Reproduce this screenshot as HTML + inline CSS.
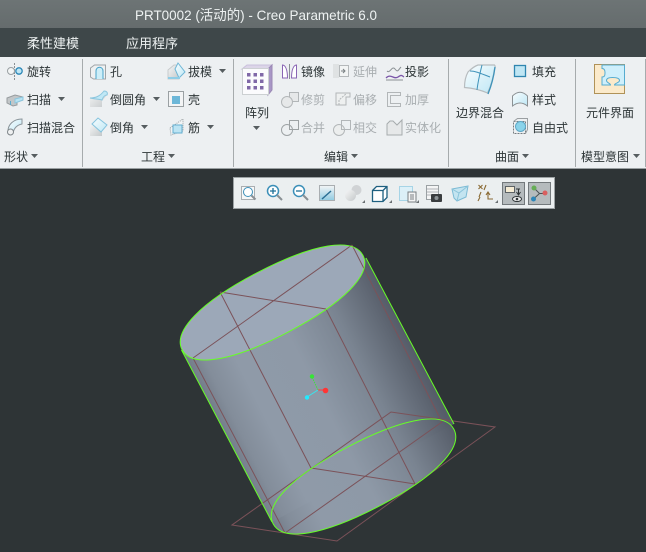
<!DOCTYPE html>
<html><head><meta charset="utf-8"><style>
html,body{margin:0;padding:0;background:#2e3436;width:646px;height:552px;overflow:hidden}
svg{display:block}
text{font-family:"Liberation Sans","Noto Sans CJK SC",sans-serif;font-size:12px;fill:#2c3436}
.d{fill:#a9aeb1}
</style></head><body>
<svg width="646" height="552" viewBox="0 0 646 552" xmlns="http://www.w3.org/2000/svg">
<defs>
<linearGradient id="tb" x1="0" y1="0" x2="0" y2="1"><stop offset="0" stop-color="#6d7475"/><stop offset="1" stop-color="#656c6d"/></linearGradient>
<linearGradient id="body" gradientUnits="userSpaceOnUse" x1="181" y1="351" x2="366" y2="258">
<stop offset="0" stop-color="#727b88"/><stop offset=".08" stop-color="#838d9a"/><stop offset=".22" stop-color="#8f9aa8"/><stop offset=".5" stop-color="#8e99a7"/><stop offset=".75" stop-color="#7a8491"/><stop offset="1" stop-color="#565d69"/>
</linearGradient>
<linearGradient id="capg" gradientUnits="userSpaceOnUse" x1="-102" y1="0" x2="102" y2="0">
<stop offset="0" stop-color="#727b88"/><stop offset=".08" stop-color="#838d9a"/><stop offset=".22" stop-color="#8f9aa8"/><stop offset=".5" stop-color="#8e99a7"/><stop offset=".75" stop-color="#7a8491"/><stop offset="1" stop-color="#565d69"/>
</linearGradient>
<linearGradient id="blu" x1="0" y1="0" x2="1" y2="1"><stop offset="0" stop-color="#e6f6fc"/><stop offset="1" stop-color="#7cc8e6"/></linearGradient>
<linearGradient id="pale" x1="0" y1="0" x2="1" y2="1"><stop offset="0" stop-color="#fafdfe"/><stop offset="1" stop-color="#bde7f5"/></linearGradient>
<linearGradient id="gr" x1="0" y1="0" x2="1" y2="1"><stop offset="0" stop-color="#f6f7f7"/><stop offset="1" stop-color="#c4c8ca"/></linearGradient>
<linearGradient id="st" x1="0" y1="0" x2="0" y2="1"><stop offset="0" stop-color="#f4f5f6"/><stop offset="1" stop-color="#8fcbe2"/></linearGradient>
<path id="cap" transform="translate(272.500 302.500) rotate(-27.600)" d="M102 0C102 20.800 63.200 33.500 0 33.500S-102 20.800 -102 0S-63.200 -33.500 0 -33.500S102 -20.800 102 0Z"/>
</defs>

<!-- chrome -->
<rect width="646" height="552" fill="#2e3436"/>
<rect width="646" height="28" fill="url(#tb)"/>
<rect y="28" width="646" height="29" fill="#3e4749"/>
<rect y="57" width="646" height="111" fill="#edf0f2"/>
<rect y="168" width="646" height="1" fill="#9aa0a2"/>
<text x="135" y="20" textLength="242" lengthAdjust="spacingAndGlyphs" style="font-size:14px;fill:#eef2f2">PRT0002 (活动的) - Creo Parametric 6.0</text>
<text x="27" y="48" style="font-size:13px;fill:#eef2f2">柔性建模</text>
<text x="126" y="48" style="font-size:13px;fill:#eef2f2">应用程序</text>
<g fill="#a6abad"><rect x="82" y="59" width="1" height="108"/><rect x="233" y="59" width="1" height="108"/><rect x="448" y="59" width="1" height="108"/><rect x="575" y="59" width="1" height="108"/><rect x="645" y="59" width="1" height="108"/></g>

<!-- ribbon text -->
<text x="27" y="76">旋转</text><text x="27" y="104">扫描</text><text x="27" y="132">扫描混合</text>
<text x="4" y="161">形状</text>
<text x="110" y="76">孔</text><text x="110" y="104">倒圆角</text><text x="110" y="132">倒角</text>
<text x="188" y="76">拔模</text><text x="188" y="104">壳</text><text x="188" y="132">筋</text>
<text x="141" y="161">工程</text>
<text x="245" y="117">阵列</text>
<text x="301" y="76">镜像</text><text x="405" y="76">投影</text>
<text class="d" x="353" y="76">延伸</text><text class="d" x="301" y="104">修剪</text><text class="d" x="353" y="104">偏移</text><text class="d" x="405" y="104">加厚</text><text class="d" x="301" y="132">合并</text><text class="d" x="353" y="132">相交</text><text class="d" x="405" y="132">实体化</text>
<text x="324" y="161">编辑</text>
<text x="532" y="76">填充</text><text x="532" y="104">样式</text><text x="532" y="132">自由式</text>
<text x="456" y="117">边界混合</text><text x="495" y="161">曲面</text>
<text x="586" y="117">元件界面</text><text x="581" y="161">模型意图</text>

<!-- dropdown arrows -->
<path fill="#565d60" d="M58 97h7l-3.500 4zM31 154h7l-3.500 4zM153 97h7l-3.500 4zM141 125h7l-3.500 4zM219 69h7l-3.500 4zM207 125h7l-3.500 4zM168 154h7l-3.500 4zM253 126h7l-3.500 4zM351 154h7l-3.500 4zM522 154h7l-3.500 4zM633 154h7l-3.500 4z"/>

<!-- shape icons -->
<g fill="none" stroke-width="1">
<path d="M14.500 63v17" stroke="#8a9094" stroke-dasharray="2 1"/>
<circle cx="11" cy="71" r="3.500" stroke="#9aa0a3" fill="#f3f5f5"/><circle cx="19" cy="71" r="3.200" stroke="#2d88b8" fill="#bfe6f4" stroke-width="1.300"/>
<path d="M7 98l8-3 8 2v3l-6 2v3l-4 1-6-3z" fill="#c2c6c8" stroke="#979c9f"/><path d="M15 99l8-2v3l-8 3z" fill="#b8e3f2" stroke="#8cc6de"/><path d="M10.500 101v4" stroke="#5aaccf"/>
<path d="M8 131c0-6 5-12 14-12v5c-5 1-8 4-9 9z" fill="url(#pale)" stroke="#8a949a"/><circle cx="10.500" cy="132" r="3" fill="#eef0f1" stroke="#7e8589"/>

<!-- engineering icons -->
<path d="M90.500 68l4-3h11v14h-12l-3-2z" fill="#eef0f1" stroke="#a0a5a8"/><path d="M96 79v-8c0-5 7-5 7 0v8" fill="#cdeef8" stroke="#4ba4ca"/>
<path d="M90 98c7 0 12-3 14-7l3 4-5 6v6H90z" fill="url(#gr)"/><path d="M90 98c6 0 10-2 14-7 3 0 4 2 3 4-2 0-4 2-5 5-3-1-8-1-12-2z" fill="#c0e8f6" stroke="#8cc6de"/>
<path d="M90 126l8-3 4 5v8H90z" fill="url(#gr)"/><path d="M98 118l9 7-6 7-9-8z" fill="url(#pale)" stroke="#86c4de"/>
<path d="M168 70l6-5h5v14h-11z" fill="url(#gr)" stroke="#c8cbcd"/><path d="M178 63l7 9-6 6-4-9z" fill="url(#pale)" stroke="#6fb6d6"/><path d="M168 78h12" stroke="#8fcde6" stroke-width="2"/>
<rect x="168.500" y="91.500" width="15" height="15" fill="#f3f4f5" stroke="#9aa0a3"/><rect x="172" y="96" width="8" height="8" fill="#6db7d8"/>
<path d="M170 128l13-9v12l-12 4z" fill="#f2f4f5" stroke="#9aa0a3" stroke-dasharray="1 1"/><path d="M173 125h9v8h-9z" fill="#bce4f3" stroke="#63aed0"/>

<!-- pattern icon -->
<path d="M242 69l5-4h25l-4 4z" fill="#dcd5e8" stroke="#c9bfdc"/><path d="M268 69l4-4v25l-4 5z" fill="#a896c6" stroke="#9a88b4"/>
<rect x="242.500" y="68.500" width="26" height="26" fill="#fbfbfd" stroke="#ccd0d2"/>
<g fill="#8068a8" stroke="none">
<rect x="247" y="73" width="3.500" height="3.500"/><rect x="253.500" y="73" width="3.500" height="3.500"/><rect x="260" y="73" width="3.500" height="3.500"/>
<rect x="247" y="79.500" width="3.500" height="3.500"/><rect x="253.500" y="79.500" width="3.500" height="3.500"/><rect x="260" y="79.500" width="3.500" height="3.500"/>
<rect x="247" y="86" width="3.500" height="3.500"/><rect x="253.500" y="86" width="3.500" height="3.500"/><rect x="260" y="86" width="3.500" height="3.500"/>
</g>

<!-- edit icons -->
<path d="M282.500 78V65c3 0 5 5 5 13zM296.500 78V65c-3 0-5 5-5 13z" stroke="#8a66b4" fill="#fff"/><path d="M289.500 64v15" stroke="#8a9094"/>
<rect x="333" y="64" width="6" height="14" fill="#dfe2e3"/><rect x="339.500" y="65.500" width="9" height="11" fill="#f2f4f4" stroke="#b4b8ba"/><path d="M341 71h4m-2-2l2 2-2 2" stroke="#7a8083"/>
<path d="M386 78c5-5 8 2 12-1s4-1 6 0" stroke="#7a55a8" stroke-width="1.300"/><path d="M387 71c3 3 5-6 8-2s3 1 6-2" stroke="#8a9094"/><path d="M386 80h17" stroke="#8a9094"/>
<g stroke="#b2b6b8">
<rect x="289.500" y="92.500" width="9" height="9" fill="#e6e8e9"/><circle cx="287" cy="102" r="5.500" fill="#e6e8e9"/>
<circle cx="287" cy="130" r="5.500" stroke="#9da2a4"/><rect x="289.500" y="120.500" width="9" height="9" stroke="#9da2a4"/>
<path d="M336 93h14v4h-4v8h-10z" fill="#eef0f0"/><path d="M339 105v-5l8-7" stroke-dasharray="2 1"/>
<path d="M387.500 92.500h13v3h-10v8h10v3h-13z"/>
<circle cx="339" cy="130" r="5.500" fill="#eceeee"/><rect x="341.500" y="120.500" width="9" height="9"/>
<path d="M387 124l3-3h3l4 4 5-5v15h-15z" fill="#e6e8e9" stroke="#a6abad"/>
</g>

<!-- surface icons -->
<path d="M464.500 87.500c0-6 1-11 3.500-15.500 3-3 7-6 10-7h16.500c1 1 1 2 0 4-1 7-3 16-7 24-7-3-15-5-23-5.500z" fill="url(#pale)" stroke="#b7bcbf" stroke-width="1.200"/>
<path d="M470 71c6 0 12 3 20 6M482 65c-2 8-4 16-5 25" stroke="#3f93ba"/><path d="M495 67c-1 8-3 17-7 27" stroke="#3f93ba" stroke-width="1.300"/>
<rect x="514.500" y="65.500" width="11" height="11" fill="#bfe6f4" stroke="#2f86b0" stroke-width="1.300"/>
<path d="M512.500 106V96c5-5 10-5 15 0v10c-5-4-10-4-15 0z" fill="url(#pale)" stroke="#8c9295"/>
<rect x="513.500" y="121.500" width="12" height="12" stroke="#777d80" stroke-dasharray="2 1"/><path d="M513.500 121.500l4-3h10v11l-2 4" stroke="#9a9fa2"/><circle cx="520.500" cy="126.500" r="5" fill="#8ad3ea" stroke="#5ea7c6"/>

<!-- component interface icon -->
<rect x="594.500" y="64.500" width="30" height="29" fill="#fbeacb" stroke="#b09258"/>
<path d="M602 65h22.500v20h-10c0-2 5-2 5-4.500s-4-3-7-3-6 .5-6 3 4 2.500 4 4.500h-8.500v-8c3 0 3-2 3-4.500s-1-4-3-4z" fill="#cfeffb" stroke="#56acd0"/>

<!-- view toolbar -->
<rect x="233.500" y="177.500" width="321" height="31" fill="#ebeff0" stroke="#9da3a5"/>
<rect x="241.500" y="186.500" width="13" height="13" fill="#f7f8f8" stroke="#a9aeb1"/>
<circle cx="248" cy="192" r="4.500" stroke="#3b8fb8" fill="#fff"/><path d="M251.500 195.500l4 4" stroke="#8a9094" stroke-width="2"/>
<circle cx="273" cy="191" r="5.500" stroke="#3b8fb8" stroke-width="1.500" fill="#fff"/><path d="M270 191h6M273 188v6" stroke="#1e6f96" stroke-width="1.300"/><path d="M277 195l5 5" stroke="#8a9094" stroke-width="2"/>
<circle cx="299" cy="191" r="5.500" stroke="#3b8fb8" stroke-width="1.500" fill="#fff"/><path d="M296 191h6" stroke="#1e6f96" stroke-width="1.300"/><path d="M303 195l5 5" stroke="#8a9094" stroke-width="2"/>
<rect x="319.500" y="185.500" width="15" height="15" fill="url(#st)" stroke="#a9aeb1"/><path d="M322 199l9-8" stroke="#2a6f94" stroke-width="1.500"/>
<circle cx="356.500" cy="190" r="5" fill="#d0d3d5"/><circle cx="350.500" cy="195.500" r="5.500" fill="url(#gr)"/>
<path d="M372.500 190.500l4-4h10.500v11l-4 4h-10.500zM372.500 190.500h10.500v11M383 190.500l4-4" stroke="#1e6080" stroke-width="1.300" fill="#fff"/>
<rect x="399.500" y="186.500" width="13" height="14" fill="#dcf0f8" stroke="#a6d4e6"/><rect x="408" y="192" width="8" height="10" fill="#f4f5f5" stroke="#7a8083"/><path d="M410 195h4M410 197h4M410 199h4" stroke="#7a8083"/>
<rect x="426.500" y="185.500" width="12" height="14" fill="#f4f5f5" stroke="#9aa0a3"/><path d="M427 189h11M427 192h11M427 195h11" stroke="#b0b4b6"/><rect x="431" y="194" width="11" height="8" rx="1" fill="#3a3d3f" stroke="none"/><circle cx="436.500" cy="198" r="2" fill="#8d9396" stroke="none"/>
<path d="M452 189l16-3-2 11-9 4-3-3z" fill="#c3e4f0" stroke="#7cbad4"/><path d="M452 189l7 4 9-7M459 193l-2 8" stroke="#8bc4da"/>
<path d="M478.500 185l4 4m0-4l-4 4M486 185l-2 5M481 192l-2 5M478 201l2-4M488 192v7h5M486 195l2-3 2 3" stroke="#8a6a34" stroke-width="1.100"/>
<path fill="#6a7073" d="M365 203v-3l-3 3zM392 203v-3l-3 3zM419 203v-3l-3 3zM498 203v-3l-3 3z"/>
<rect x="502.500" y="182.500" width="22" height="22" fill="#b5bbbd" stroke="#73797c"/>
<rect x="505.500" y="186.500" width="9" height="6" fill="#f5ecd4" stroke="#5c6265"/><path d="M516 189h4M518.500 189v5m-2-2l2 3 2-3" stroke="#2e3436"/><ellipse cx="517" cy="199" rx="4.500" ry="2.500" fill="#f1f2f2" stroke="#2e3436"/><circle cx="517" cy="199" r="1.300" fill="#2e3436" stroke="none"/>
<rect x="528.500" y="182.500" width="22" height="22" fill="#b5bbbd" stroke="#73797c"/>
<path d="M534 188l5.500 5.500-6 5.500M539.500 193.500h6" stroke="#4a5154"/><circle cx="534" cy="188" r="2.500" fill="#66ad56" stroke="none"/><circle cx="545" cy="193" r="2.500" fill="#d95f5f" stroke="none"/><circle cx="533.500" cy="199" r="2.500" fill="#2f86b8" stroke="none"/>
</g>

<!-- model -->
<g transform="translate(91 174)"><use href="#cap" fill="url(#capg)"/></g>
<polygon points="181.500,350 272,522 454,424 366,258" fill="url(#body)"/>
<use href="#cap" fill="#9ca8b8"/>
<g fill="none" stroke="#7b5259" stroke-width="1">
<path d="M232 525L337 541 495 427 391 412z"/>
<path d="M220 292L326 309M352 245L193 358M220 292L311 468M326 309L415 484M352 245L442 422M193 358L285 533M311 468L415 484M285 533L442 422"/>
</g>
<g fill="none" stroke="#66ff26" stroke-width="1">
<use href="#cap"/>
<g transform="translate(91 174)"><use href="#cap"/></g>
<path d="M181.500 350L272 522M366 258L454 424"/>
</g>
<path d="M318 390L312 377" stroke="#3de03d" stroke-dasharray="1.500 1" fill="none"/>
<path d="M318 390h7" stroke="#ff3c3c" fill="none"/>
<path d="M318 390L307 397" stroke="#35e6f0" fill="none"/>
<circle cx="312" cy="376.500" r="2.200" fill="#35e635"/>
<circle cx="325.500" cy="390.500" r="2.800" fill="#ff3535"/>
<circle cx="307" cy="397.500" r="2.200" fill="#22eaff"/>
</svg>
</body></html>
